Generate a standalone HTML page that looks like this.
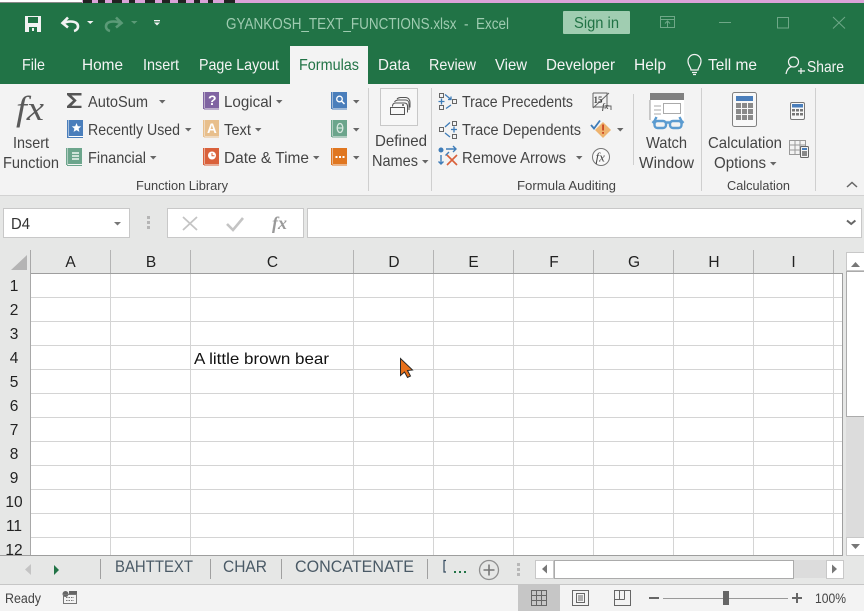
<!DOCTYPE html>
<html><head><meta charset="utf-8"><title>Excel</title>
<style>
html,body{margin:0;padding:0;background:#fff}
svg{display:block;font-family:"Liberation Sans",sans-serif}
.t{font-size:16px;fill:#f4f4f4}
.r{font-size:16px;fill:#444}
.g{font-size:13px;fill:#444}
.h{font-size:15.5px;fill:#222;text-anchor:middle}
.s{font-size:16.5px;fill:#4a5a66}
</style></head><body>
<svg width="864" height="611" viewBox="0 0 864 611" xmlns="http://www.w3.org/2000/svg">
<defs>
<path id="d" d="M0 0h6.500l-3.250 3.500z" fill="#666"/>
</defs>
<rect width="864" height="611" fill="#fff"/>
<!-- top strip -->
<rect x="0" y="0" width="82" height="2" fill="#fff"/><rect x="0" y="2" width="82" height="1" fill="#888"/>
<rect x="82" y="0" width="782" height="3" fill="#dba3d9"/>
<g fill="#222"><rect x="83" y="0" width="9" height="3"/><rect x="98" y="0" width="7" height="3"/><rect x="112" y="0" width="10" height="3"/><rect x="129" y="0" width="6" height="3"/><rect x="145" y="0" width="10" height="3"/><rect x="162" y="0" width="8" height="3"/><rect x="178" y="0" width="8" height="3"/><rect x="194" y="0" width="6" height="3"/><rect x="208" y="0" width="5" height="3"/><rect x="224" y="0" width="11" height="3"/></g>
<!-- title bar -->
<rect x="0" y="3" width="864" height="81" fill="#217346"/>
<path fill-rule="evenodd" d="M25 16h16v16H25zM28 17v6h10v-6zM29 27v5h8v-5zM32 28h2v3h-2z" fill="#f2f2f2"/>
<path d="M63 23.500c5-3 15-3 15 3 0 2.500-2 4-4 4.500M68 17.500l-5.500 5.500 5.500 4.500" fill="none" stroke="#f2f2f2" stroke-width="2.600"/>
<path d="M87 21h6.500l-3.250 3z" fill="#f2f2f2"/>
<path d="M121 23.500c-5-3-15-3-15 3 0 2.500 2 4 4 4.500M116 17.500l5.500 5.500-5.500 4.500" fill="none" stroke="#5b9a77" stroke-width="2.600"/>
<path d="M131 21h6.500l-3.250 3z" fill="#5b9a77"/>
<rect x="154" y="20" width="6" height="1.300" fill="#f2f2f2"/><path d="M154 22.500h6l-3 3z" fill="#f2f2f2"/>
<text x="226" y="29" font-size="15.500" fill="#9ecbb0" textLength="283" lengthAdjust="spacingAndGlyphs" xml:space="preserve">GYANKOSH_TEXT_FUNCTIONS.xlsx  -  Excel</text>
<rect x="563" y="11" width="67" height="23" rx="1" fill="#a0cdb1"/>
<text x="574" y="28" font-size="16" fill="#217346" textLength="45" lengthAdjust="spacingAndGlyphs">Sign in</text>
<g fill="none" stroke="#6fa888" stroke-width="1">
<rect x="660.500" y="16.500" width="14" height="11"/><path d="M660.500 19.500h14M667.500 27.500v-6M665 23.500l2.500-2.500 2.500 2.500"/>
<path d="M719 22.500h12"/><rect x="777.500" y="17.500" width="11" height="10.500"/><path d="M833 17l12 11.500M845 17l-12 11.500"/>
</g>
<!-- tabs -->
<rect x="290" y="46" width="78" height="38" fill="#f3f3f3"/>
<text class="t" x="22" y="70" textLength="23" lengthAdjust="spacingAndGlyphs">File</text>
<text class="t" x="82" y="70" textLength="41" lengthAdjust="spacingAndGlyphs">Home</text>
<text class="t" x="143" y="70" textLength="36" lengthAdjust="spacingAndGlyphs">Insert</text>
<text class="t" x="199" y="70" textLength="80" lengthAdjust="spacingAndGlyphs">Page Layout</text>
<text x="299" y="70" font-size="16" fill="#217346" textLength="60" lengthAdjust="spacingAndGlyphs">Formulas</text>
<text class="t" x="378" y="70" textLength="32" lengthAdjust="spacingAndGlyphs">Data</text>
<text class="t" x="429" y="70" textLength="47" lengthAdjust="spacingAndGlyphs">Review</text>
<text class="t" x="495" y="70" textLength="32" lengthAdjust="spacingAndGlyphs">View</text>
<text class="t" x="546" y="70" textLength="69" lengthAdjust="spacingAndGlyphs">Developer</text>
<text class="t" x="634" y="70" textLength="32" lengthAdjust="spacingAndGlyphs">Help</text>
<path d="M691 70c0-3-3-4-3-9a6.500 6.500 0 0 1 13 0c0 5-3 6-3 9zM692 72.500h5M693 74.500h3" fill="none" stroke="#f2f2f2" stroke-width="1.200"/>
<text class="t" x="708" y="70" textLength="49" lengthAdjust="spacingAndGlyphs">Tell me</text>
<circle cx="793.500" cy="62" r="5" fill="none" stroke="#f2f2f2" stroke-width="1.200"/>
<path d="M786 74c1-5 3-7 6-7.500M801 68v6M798 71h7" fill="none" stroke="#f2f2f2" stroke-width="1.200"/>
<text class="t" x="807" y="72" textLength="37" lengthAdjust="spacingAndGlyphs">Share</text>
<!-- ribbon -->
<rect x="0" y="84" width="864" height="111" fill="#f3f3f3"/>
<rect x="0" y="195" width="864" height="1" fill="#d2d2d2"/>
<g fill="#cfcfcf"><rect x="368" y="88" width="1" height="103"/><rect x="431" y="88" width="1" height="103"/><rect x="633" y="94" width="1" height="71"/><rect x="701" y="88" width="1" height="103"/><rect x="815" y="88" width="1" height="103"/></g>
<!-- function library -->
<text x="16" y="120" font-family="Liberation Serif" font-style="italic" font-size="35" fill="#5a5a5a" textLength="28" lengthAdjust="spacingAndGlyphs">fx</text>
<text class="r" x="13" y="148" textLength="36" lengthAdjust="spacingAndGlyphs">Insert</text>
<text class="r" x="3" y="168" textLength="56" lengthAdjust="spacingAndGlyphs">Function</text>
<path d="M67 93h14.500v2.500h-10l5.200 5-5.200 5.200h10v2.300H67v-2l6-5.500-6-5.500z" fill="#555"/>
<text class="r" x="88" y="107" textLength="60" lengthAdjust="spacingAndGlyphs">AutoSum</text>
<use href="#d" x="159" y="100"/>
<!-- recently used -->
<rect x="67" y="120" width="16" height="18" fill="#fff"/><rect x="67" y="120" width="1.500" height="18" fill="#4a7ebb"/><rect x="69" y="120" width="14" height="16" fill="#4a7ebb"/><rect x="68" y="137" width="15" height="1" fill="#4a7ebb"/>
<path d="M76.500 123l1.300 3.200 3.400.2-2.600 2.200.8 3.300-2.900-1.800-2.900 1.800.8-3.300-2.600-2.200 3.400-.2z" fill="#fff"/>
<text class="r" x="88" y="135" textLength="92" lengthAdjust="spacingAndGlyphs">Recently Used</text>
<use href="#d" x="185" y="128"/>
<!-- financial -->
<rect x="66" y="148" width="1.500" height="17" fill="#6ca58c"/><rect x="68" y="148" width="14" height="16" fill="#6ca58c"/><rect x="67" y="165" width="15" height="1" fill="#6ca58c"/>
<g fill="#cfe3d9"><rect x="72" y="152" width="7" height="2"/><rect x="72" y="155" width="7" height="2"/><rect x="72" y="158" width="7" height="2"/></g>
<text class="r" x="88" y="163" textLength="58" lengthAdjust="spacingAndGlyphs">Financial</text>
<use href="#d" x="150" y="156"/>
<!-- logical -->
<rect x="203" y="92" width="1.500" height="17" fill="#8064a2"/><rect x="205" y="92" width="14" height="16" fill="#8064a2"/><rect x="204" y="108.500" width="15" height="1" fill="#8064a2"/>
<text x="208" y="105" font-size="14" font-weight="bold" fill="#fff">?</text>
<text class="r" x="224" y="107" textLength="48" lengthAdjust="spacingAndGlyphs">Logical</text>
<use href="#d" x="276" y="100"/>
<!-- text -->
<rect x="203" y="120" width="1.500" height="17" fill="#e8bf8c"/><rect x="205" y="120" width="14" height="16" fill="#e8bf8c"/><rect x="204" y="136.500" width="15" height="1" fill="#e8bf8c"/>
<text x="207" y="133" font-size="13.500" font-weight="bold" fill="#fff">A</text>
<text class="r" x="224" y="135" textLength="27" lengthAdjust="spacingAndGlyphs">Text</text>
<use href="#d" x="255" y="128"/>
<!-- date -->
<rect x="203" y="148" width="1.500" height="17" fill="#d9603a"/><rect x="205" y="148" width="14" height="16" fill="#d9603a"/><rect x="204" y="164.500" width="15" height="1" fill="#d9603a"/>
<circle cx="212" cy="155.500" r="4" fill="#fff"/><path d="M212 153v2.800h2.500" fill="none" stroke="#d9603a" stroke-width="1"/>
<text class="r" x="224" y="163" textLength="85" lengthAdjust="spacingAndGlyphs">Date &amp; Time</text>
<use href="#d" x="313" y="156"/>
<!-- col 3 -->
<rect x="331" y="92" width="1.500" height="17" fill="#4a7ebb"/><rect x="333" y="92" width="14" height="16" fill="#4a7ebb"/><rect x="332" y="108.500" width="15" height="1" fill="#4a7ebb"/>
<circle cx="339.500" cy="99" r="2.800" fill="none" stroke="#fff" stroke-width="1.300"/><path d="M341.500 101l3 3" stroke="#fff" stroke-width="1.500"/>
<use href="#d" x="353" y="100"/>
<rect x="331" y="120" width="1.500" height="17" fill="#6ca58c"/><rect x="333" y="120" width="14" height="16" fill="#6ca58c"/><rect x="332" y="136.500" width="15" height="1" fill="#6ca58c"/>
<ellipse cx="340" cy="128" rx="2.800" ry="4.500" fill="none" stroke="#d8e8e0" stroke-width="1.300"/><path d="M337.500 128h5" stroke="#d8e8e0" stroke-width="1.200"/>
<use href="#d" x="353" y="128"/>
<rect x="331" y="148" width="1.500" height="17" fill="#e0761f"/><rect x="333" y="148" width="14" height="16" fill="#e0761f"/><rect x="332" y="164.500" width="15" height="1" fill="#e0761f"/>
<g fill="#fff"><rect x="335.500" y="156" width="2" height="2"/><rect x="339" y="156" width="2" height="2"/><rect x="342.500" y="156" width="2" height="2"/></g>
<use href="#d" x="353" y="156"/>
<text class="g" x="136" y="190" textLength="92" lengthAdjust="spacingAndGlyphs">Function Library</text>
<!-- defined names -->
<rect x="380.500" y="88.500" width="37" height="37" fill="#f7f7f7" stroke="#c8c8c8"/>
<g fill="none" stroke="#555" stroke-width="1">
<rect x="390.500" y="107.500" width="14" height="7" fill="#f7f7f7"/>
<path d="M392.500 106.500c0-2 1-3.500 3-3.500h9c2 0 3 1.500 3 3.500v6M394.500 102c1-1.500 2-2 4-2h7c2 0 3.500 1.500 3.500 4v6M397 99c1-1 2-1.500 3.500-1.500h5c2.500 0 4.500 2 4.500 5v5"/>
</g><circle cx="403" cy="105" r="1" fill="#555"/>
<text class="r" x="375" y="146" textLength="52" lengthAdjust="spacingAndGlyphs">Defined</text>
<text class="r" x="372" y="166" textLength="46" lengthAdjust="spacingAndGlyphs">Names</text>
<use href="#d" x="422" y="160"/>
<!-- auditing -->
<g fill="none" stroke="#666" stroke-width="1"><rect x="439.500" y="93.500" width="4" height="4"/><rect x="439.500" y="105.500" width="4" height="4"/><rect x="452.500" y="99.500" width="4" height="4"/></g>
<g stroke="#3e7cb8" stroke-width="1.300" fill="none"><path d="M438.500 101.500h6M441.500 98.500v6M445 94.500l6 5M451 105l-5 3.500M451 96.500v3h-3"/></g>
<text class="r" x="462" y="107" textLength="111" lengthAdjust="spacingAndGlyphs">Trace Precedents</text>
<g fill="none" stroke="#666" stroke-width="1"><rect x="439.500" y="127.500" width="4" height="4"/><rect x="452.500" y="121.500" width="4" height="4"/><rect x="452.500" y="134.500" width="4" height="4"/></g>
<g stroke="#3e7cb8" stroke-width="1.300" fill="none"><path d="M451 129.500h6M454 126.500v6M445 127l5-4.500M445 133l5 4"/></g>
<text class="r" x="462" y="135" textLength="119" lengthAdjust="spacingAndGlyphs">Trace Dependents</text>
<circle cx="441" cy="150" r="2.500" fill="#3e7cb8"/>
<g stroke="#3e7cb8" stroke-width="1.400" fill="none"><path d="M446 149h10M453 146l3 3-3 3M441 155v9M438.500 161.500l2.500 2.500 2.500-2.500M449 152l-3.500 3.500"/></g>
<path d="M447 155l10 10M457 155l-10 10" stroke="#d9603a" stroke-width="1.600"/>
<text class="r" x="462" y="163" textLength="104" lengthAdjust="spacingAndGlyphs">Remove Arrows</text>
<use href="#d" x="576" y="156"/>
<path d="M593 93h14v13h4v4M593 93v14h14" fill="none" stroke="#666" stroke-width="1"/><path d="M593 108l16-15" stroke="#666" stroke-width="1"/>
<text x="593.500" y="103" font-family="Liberation Serif" font-size="9" font-weight="bold" fill="#444">15</text>
<text x="602" y="109" font-family="Liberation Serif" font-style="italic" font-size="8" font-weight="bold" fill="#555">fx</text>
<path d="M591 125l3 3.500 6-8" fill="none" stroke="#3e7cb8" stroke-width="1.800"/>
<path d="M603 122l8 8-8 8-8-8z" fill="#eeb36f"/><rect x="602.200" y="124.500" width="1.700" height="6" fill="#c9401e"/><rect x="602.200" y="132" width="1.700" height="1.800" fill="#c9401e"/>
<use href="#d" x="617" y="128"/>
<circle cx="601" cy="157" r="8.500" fill="#f9f9f9" stroke="#777" stroke-width="1"/>
<text x="595.500" y="161.500" font-family="Liberation Serif" font-style="italic" font-size="13" fill="#444">fx</text>
<text class="g" x="517" y="190" textLength="99" lengthAdjust="spacingAndGlyphs">Formula Auditing</text>
<!-- watch window -->
<rect x="650" y="93" width="34" height="7" fill="#808080"/><rect x="650" y="100" width="34" height="20" fill="#fff"/>
<path d="M650 100v20" stroke="#999" stroke-width="1"/>
<rect x="663.500" y="103.500" width="17" height="10" fill="#fff" stroke="#aaa"/>
<path d="M654 106h7M654 110h7M654 114h7" stroke="#aaa" stroke-width="1"/>
<g fill="none" stroke="#5b9bd0" stroke-width="2.400"><rect x="654.500" y="121" width="11.500" height="7" rx="3"/><rect x="670" y="121" width="11.500" height="7" rx="3"/><path d="M666 122.500h4M654.500 121l2-4M681.500 121l-2-4M652.500 123l2-2M683.500 123l-2-2"/></g>
<text class="r" x="646" y="148" textLength="41" lengthAdjust="spacingAndGlyphs">Watch</text>
<text class="r" x="639" y="168" textLength="55" lengthAdjust="spacingAndGlyphs">Window</text>
<!-- calc -->
<rect x="732.500" y="92.500" width="24" height="34" rx="2" fill="#f8f8f8" stroke="#808080"/>
<rect x="736" y="96" width="17" height="5" fill="#4a7ebb"/>
<g fill="#8a8a8a"><rect x="736" y="103" width="5" height="5"/><rect x="742" y="103" width="5" height="5"/><rect x="748" y="103" width="5" height="5"/><rect x="736" y="109" width="5" height="5"/><rect x="742" y="109" width="5" height="5"/><rect x="748" y="109" width="5" height="5"/><rect x="736" y="115" width="5" height="5"/><rect x="742" y="115" width="5" height="5"/><rect x="748" y="115" width="5" height="5"/></g>
<text class="r" x="708" y="148" textLength="74" lengthAdjust="spacingAndGlyphs">Calculation</text>
<text class="r" x="714" y="168" textLength="52" lengthAdjust="spacingAndGlyphs">Options</text>
<use href="#d" x="770" y="162"/>
<rect x="790.500" y="102.500" width="14" height="17" rx="1.500" fill="#f8f8f8" stroke="#777"/>
<rect x="792" y="104" width="11" height="3.500" fill="#4a7ebb"/>
<g fill="#777"><rect x="792" y="109" width="3" height="2.500"/><rect x="796" y="109" width="3" height="2.500"/><rect x="800" y="109" width="3" height="2.500"/><rect x="792" y="113" width="3" height="2.500"/><rect x="796" y="113" width="3" height="2.500"/><rect x="800" y="113" width="3" height="2.500"/></g>
<g fill="none" stroke="#999" stroke-width="1"><rect x="789.500" y="140.500" width="16" height="14"/><path d="M789.500 145h16M789.500 150h16M795 140.500v14M800 140.500v14"/></g>
<rect x="800.500" y="146.500" width="8" height="11" rx="1" fill="#f3f3f3" stroke="#666"/><rect x="802" y="148" width="5" height="2" fill="#4a7ebb"/><rect x="802" y="151" width="5" height="5" fill="#888"/>
<text class="g" x="727" y="190" textLength="63" lengthAdjust="spacingAndGlyphs">Calculation</text>
<path d="M847 187l5-4.500 5 4.500" fill="none" stroke="#666" stroke-width="1.500"/>
<!-- formula bar area -->
<rect x="0" y="196" width="864" height="360" fill="#e6e7e6"/>
<rect x="3.500" y="208.500" width="126" height="29" fill="#fff" stroke="#c8c8c8"/>
<text x="11" y="229" font-size="15.500" fill="#333" textLength="19" lengthAdjust="spacingAndGlyphs">D4</text>
<path d="M114 222h7l-3.500 3.500z" fill="#777"/>
<g fill="#b5b5b5"><rect x="147" y="216" width="3" height="3"/><rect x="147" y="221" width="3" height="3"/><rect x="147" y="226" width="3" height="3"/></g>
<rect x="167.500" y="208.500" width="136" height="29" fill="#fff" stroke="#c8c8c8"/>
<path d="M183 217l14 13M197 217l-14 13" stroke="#c4c4c4" stroke-width="1.800"/>
<path d="M227 224l6 6 10-12" fill="none" stroke="#c4c4c4" stroke-width="2.600"/>
<text x="272" y="229" font-family="Liberation Serif" font-style="italic" font-weight="bold" font-size="18" fill="#999" textLength="15" lengthAdjust="spacingAndGlyphs">fx</text>
<rect x="307.500" y="208.500" width="554" height="29" fill="#fff" stroke="#c8c8c8"/>
<path d="M847 220.500l4.200 3.500 4.200-3.500" fill="none" stroke="#666" stroke-width="2"/>
<!-- grid -->
<rect x="30" y="274" width="812" height="281" fill="#fff"/>
<g fill="#d4d4d4">
<rect x="31" y="297" width="811" height="1"/><rect x="31" y="321" width="811" height="1"/><rect x="31" y="345" width="811" height="1"/><rect x="31" y="369" width="811" height="1"/><rect x="31" y="393" width="811" height="1"/><rect x="31" y="417" width="811" height="1"/><rect x="31" y="441" width="811" height="1"/><rect x="31" y="465" width="811" height="1"/><rect x="31" y="489" width="811" height="1"/><rect x="31" y="513" width="811" height="1"/><rect x="31" y="537" width="811" height="1"/>
<rect x="110" y="274" width="1" height="281"/><rect x="190" y="274" width="1" height="281"/><rect x="353" y="274" width="1" height="281"/><rect x="433" y="274" width="1" height="281"/><rect x="513" y="274" width="1" height="281"/><rect x="593" y="274" width="1" height="281"/><rect x="673" y="274" width="1" height="281"/><rect x="753" y="274" width="1" height="281"/><rect x="833" y="274" width="1" height="281"/>
</g>
<rect x="30" y="273" width="813" height="1" fill="#9e9e9e"/>
<rect x="30" y="250" width="1" height="305" fill="#a8a8a8"/>
<rect x="842" y="273" width="1" height="283" fill="#9e9e9e"/>
<rect x="0" y="555" width="843" height="1" fill="#9e9e9e"/>
<g fill="#b4b4b4"><rect x="110" y="250" width="1" height="23"/><rect x="190" y="250" width="1" height="23"/><rect x="353" y="250" width="1" height="23"/><rect x="433" y="250" width="1" height="23"/><rect x="513" y="250" width="1" height="23"/><rect x="593" y="250" width="1" height="23"/><rect x="673" y="250" width="1" height="23"/><rect x="753" y="250" width="1" height="23"/><rect x="833" y="250" width="1" height="23"/></g>
<path d="M27 255v15H11z" fill="#b4b4b4"/>
<text class="h" x="70.500" y="267">A</text><text class="h" x="151" y="267">B</text><text class="h" x="272.500" y="267">C</text><text class="h" x="394" y="267">D</text><text class="h" x="473.500" y="267">E</text><text class="h" x="554" y="267">F</text><text class="h" x="634" y="267">G</text><text class="h" x="714" y="267">H</text><text class="h" x="793.500" y="267">I</text>
<text class="h" x="14" y="291">1</text><text class="h" x="14" y="315">2</text><text class="h" x="14" y="339">3</text><text class="h" x="14" y="363">4</text><text class="h" x="14" y="387">5</text><text class="h" x="14" y="411">6</text><text class="h" x="14" y="435">7</text><text class="h" x="14" y="459">8</text><text class="h" x="14" y="483">9</text><text class="h" x="14" y="507">10</text><text class="h" x="14" y="531">11</text>
<svg x="0" y="538" width="30" height="17"><text class="h" x="14" y="17">12</text></svg>
<text x="194" y="364" font-size="16" fill="#111" textLength="135" lengthAdjust="spacingAndGlyphs">A little brown bear</text>
<path d="M400.500 358.500v17l4-3.500 3 5.500 3-1.500-3-5.500 5-.5z" fill="#e8701a" stroke="#2a2a2a" stroke-width="1"/>
<!-- v scrollbar -->
<rect x="846" y="252" width="18" height="303" fill="#dcdcdc"/>
<rect x="846.500" y="252.500" width="18" height="18" fill="#fff" stroke="#c8c8c8"/>
<path d="M851 267h9l-4.500-5z" fill="#777"/>
<rect x="846.500" y="271.500" width="18" height="145" fill="#fff" stroke="#ababab"/>
<rect x="846.500" y="537.500" width="18" height="18" fill="#fff" stroke="#c8c8c8"/>
<path d="M851 544h9l-4.500 5z" fill="#777"/>
<!-- sheet tabs -->
<rect x="0" y="556" width="864" height="28" fill="#e6e7e6"/>
<path d="M31 564v11l-6-5.500z" fill="#c4c4c4"/><path d="M54 565v10l5-5z" fill="#217346"/>
<g fill="#a0a0a0"><rect x="100" y="559" width="1" height="20"/><rect x="210" y="559" width="1" height="20"/><rect x="281" y="559" width="1" height="20"/><rect x="427" y="559" width="1" height="20"/></g>
<text class="s" x="115" y="572" textLength="78" lengthAdjust="spacingAndGlyphs">BAHTTEXT</text>
<text class="s" x="223" y="572" textLength="44" lengthAdjust="spacingAndGlyphs">CHAR</text>
<text class="s" x="295" y="572" textLength="119" lengthAdjust="spacingAndGlyphs">CONCATENATE</text>
<path d="M446 560.500h-2v11.500h2" fill="none" stroke="#33495e" stroke-width="1.200"/>
<g fill="#217346"><rect x="454" y="571" width="2" height="2"/><rect x="459" y="571" width="2" height="2"/><rect x="464" y="571" width="2" height="2"/></g>
<circle cx="489" cy="570" r="9.500" fill="none" stroke="#8f8f8f" stroke-width="1.300"/>
<path d="M489 564.500v11M483.500 570h11" stroke="#777" stroke-width="1.600"/>
<g fill="#b8b8b8"><rect x="517" y="563" width="3" height="3"/><rect x="517" y="568" width="3" height="3"/><rect x="517" y="573" width="3" height="3"/></g>
<rect x="535" y="560" width="307" height="18" fill="#dcdcdc"/>
<rect x="535.500" y="560.500" width="18" height="18" fill="#fff" stroke="#c8c8c8"/>
<path d="M547 564.500v9l-5-4.500z" fill="#777"/>
<rect x="554.500" y="560.500" width="239" height="18" fill="#fff" stroke="#ababab"/>
<rect x="826.500" y="560.500" width="17" height="18" fill="#fff" stroke="#c8c8c8"/>
<path d="M832 564.500v9l5-4.500z" fill="#777"/>
<!-- status bar -->
<rect x="0" y="584" width="864" height="1" fill="#c6c6c6"/>
<rect x="0" y="585" width="864" height="26" fill="#f3f3f3"/>
<text x="5" y="603" font-size="13.500" fill="#444" textLength="36" lengthAdjust="spacingAndGlyphs">Ready</text>
<circle cx="65.500" cy="594" r="3" fill="#666"/><rect x="69" y="591" width="8" height="3.500" fill="#666"/>
<rect x="63.500" y="594.500" width="13" height="9" fill="none" stroke="#777"/>
<path d="M66 597.500h8M66 600.500h8" stroke="#777" stroke-dasharray="1.500 1"/>
<rect x="518" y="585" width="42" height="26" fill="#c6c6c6"/>
<g fill="none" stroke="#666" stroke-width="1"><rect x="531.500" y="590.500" width="15" height="15"/><path d="M531.500 595.500h15M531.500 600.500h15M536.500 590.500v15M541.500 590.500v15"/>
<rect x="572.500" y="590.500" width="16" height="15"/><rect x="576.500" y="593.500" width="8" height="9"/><path d="M578 596h5M578 598h5M578 600h5"/>
<rect x="614.500" y="590.500" width="16" height="15"/><path d="M614.500 599.500h10M624.500 590.500v9M619.500 590.500v9"/></g>
<rect x="649" y="597" width="10" height="2" fill="#666"/>
<rect x="663" y="598" width="125" height="1" fill="#999"/>
<rect x="723" y="591" width="6" height="14" fill="#666"/>
<path d="M792 598h10M797 593v10" stroke="#666" stroke-width="2"/>
<text x="815" y="603" font-size="13.500" fill="#444" textLength="31" lengthAdjust="spacingAndGlyphs">100%</text>
</svg>
</body></html>
